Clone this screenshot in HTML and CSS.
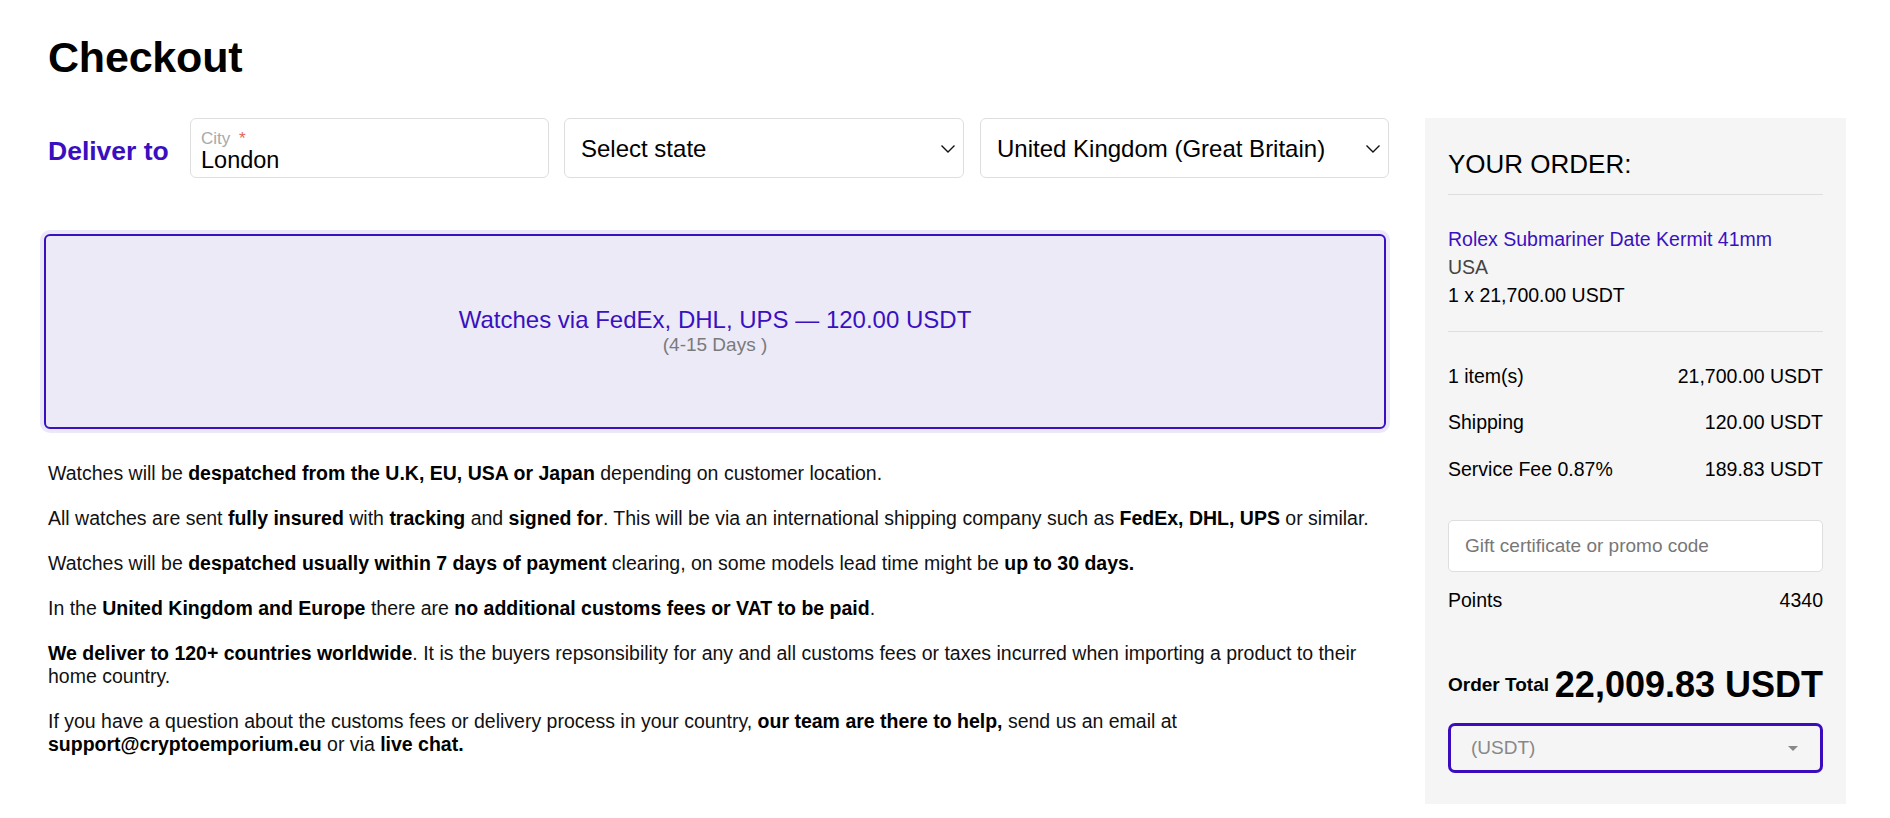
FILE: index.html
```html
<!DOCTYPE html>
<html lang="en">
<head>
<meta charset="utf-8">
<title>Checkout</title>
<link rel="stylesheet" href="styles.css">
</head>
<body>
<div class="page">
  <div class="main">
    <h1 class="title">Checkout</h1>
    <div class="deliver">
      <div class="deliver-label">Deliver to</div>
      <div class="field field-city">
        <div class="field-label">City <span class="req">*</span></div>
        <div class="field-value">London</div>
      </div>
      <div class="field field-select field-state">
        <span>Select state</span>
        <svg class="chev" width="16" height="10" viewBox="0 0 16 10"><polyline points="1.5,1.5 8,8 14.5,1.5" fill="none" stroke="#111" stroke-width="1.4"/></svg>
      </div>
      <div class="field field-select field-country">
        <span>United Kingdom (Great Britain)</span>
        <svg class="chev" width="16" height="10" viewBox="0 0 16 10"><polyline points="1.5,1.5 8,8 14.5,1.5" fill="none" stroke="#111" stroke-width="1.4"/></svg>
      </div>
    </div>
    <div class="ship-option">
      <div class="ship-name">Watches via FedEx, DHL, UPS — 120.00 USDT</div>
      <div class="ship-days">(4-15 Days )</div>
    </div>
    <div class="info">
      <p>Watches will be <b>despatched from the U.K, EU, USA or Japan</b> depending on customer location.</p>
      <p>All watches are sent <b>fully insured</b> with <b>tracking</b> and <b>signed for</b>. This will be via an international shipping company such as <b>FedEx, DHL, UPS</b> or similar.</p>
      <p>Watches will be <b>despatched usually within 7 days of payment</b> clearing, on some models lead time might be <b>up to 30 days.</b></p>
      <p>In the <b>United Kingdom and Europe</b> there are <b>no additional customs fees or VAT to be paid</b>.</p>
      <p><b>We deliver to 120+ countries worldwide</b>. It is the buyers repsonsibility for any and all customs fees or taxes incurred when importing a product to their home country.</p>
      <p>If you have a question about the customs fees or delivery process in your country, <b>our team are there to help,</b> send us an email at <b>support@cryptoemporium.eu</b> or via <b>live chat.</b></p>
    </div>
  </div>
  <aside class="order">
    <h2 class="order-title">YOUR ORDER:</h2>
    <div class="order-item">
      <div class="item-name">Rolex Submariner Date Kermit 41mm</div>
      <div class="item-origin">USA</div>
      <div class="item-qty">1 x 21,700.00 USDT</div>
    </div>
    <div class="summary">
      <div class="sum-row"><span>1 item(s)</span><span>21,700.00 USDT</span></div>
      <div class="sum-row"><span>Shipping</span><span>120.00 USDT</span></div>
      <div class="sum-row"><span>Service Fee 0.87%</span><span>189.83 USDT</span></div>
    </div>
    <div class="promo">Gift certificate or promo code</div>
    <div class="sum-row points"><span>Points</span><span>4340</span></div>
    <div class="total">
      <span class="total-label">Order Total</span>
      <span class="total-value">22,009.83 USDT</span>
    </div>
    <div class="currency">
      <span>(USDT)</span>
      <span class="caret"></span>
    </div>
  </aside>
</div>
</body>
</html>
```

FILE: styles.css
```css
* { box-sizing: border-box; }
html, body { margin: 0; padding: 0; background: #fff; }
body {
  font-family: "Liberation Sans", Arial, Helvetica, sans-serif;
  color: #000;
}
.page {
  display: flex;
  align-items: flex-start;
  gap: 36px;
  padding: 32px 44px 0 48px;
}
.main {
  width: 1341px;
  flex: none;
}
.title {
  margin: 0 0 36px;
  font-size: 43px;
  line-height: 50px;
  font-weight: bold;
  letter-spacing: -0.2px;
}
.deliver {
  display: flex;
  align-items: center;
  height: 60px;
}
.deliver-label {
  font-size: 26.5px;
  font-weight: bold;
  color: #3a0fbf;
  width: 123px;
  margin-right: 19px;
  padding-top: 6px;
  white-space: nowrap;
}
.field {
  height: 60px;
  border: 1px solid #dedede;
  border-radius: 6px;
  background: #fff;
}
.field-city {
  width: 359px;
  padding: 11px 10px 0;
  margin-right: 15px;
}
.field-label {
  font-size: 17px;
  line-height: 18px;
  color: #a9a9a9;
}
.req { color: #e0655c; margin-left: 4px; }
.field-value {
  font-size: 23.5px;
  line-height: 24px;
  color: #000;
}
.field-select {
  display: flex;
  align-items: center;
  justify-content: space-between;
  padding: 1px 7px 0 16px;
  font-size: 24px;
}
.field-state { width: 400px; margin-right: 16px; }
.field-country { width: 409px; }
.chev { display: block; }
.ship-option {
  margin: 56px 3px 0 -4px;
  height: 195px;
  border: 2px solid #3a10c0;
  border-radius: 6px;
  background: #eceaf7;
  box-shadow: 0 0 0 4px #ebe8f9;
  display: flex;
  flex-direction: column;
  align-items: center;
  justify-content: center;
}
.ship-name {
  font-size: 24px;
  line-height: 27px;
  color: #3a10c0;
}
.ship-days {
  font-size: 19px;
  line-height: 24px;
  color: #7a7a7a;
}
.info { margin-top: 33px; }
.info p {
  margin: 0 0 22px;
  font-size: 19.5px;
  line-height: 23px;
  color: #111;
}
.info b { color: #000; }
.order {
  width: 421px;
  flex: none;
  margin-top: 86px;
  background: #f5f5f5;
  padding: 31px 23px 31px;
}
.order-title {
  margin: 0;
  font-size: 26px;
  line-height: 30px;
  font-weight: normal;
  padding-bottom: 15px;
  border-bottom: 1px solid #dedede;
}
.order-item {
  padding: 29.5px 0 22.5px;
  border-bottom: 1px solid #dedede;
  font-size: 19.5px;
  line-height: 28px;
}
.item-name { color: #3a10c0; }
.item-origin { color: #444; }
.item-qty { color: #000; }
.summary { padding-top: 29.5px; }
.sum-row {
  display: flex;
  justify-content: space-between;
  font-size: 19.5px;
  line-height: 28px;
  margin-bottom: 18.5px;
}
.summary .sum-row:last-child { margin-bottom: 0; }
.promo {
  margin-top: 37.5px;
  height: 52px;
  background: #fff;
  border: 1px solid #dedede;
  border-radius: 5px;
  padding-left: 16px;
  display: flex;
  align-items: center;
  font-size: 19px;
  color: #777;
}
.sum-row.points { margin: 13.5px 0 0; }
.total {
  margin-top: 49.5px;
  height: 44px;
  display: flex;
  align-items: center;
  justify-content: space-between;
}
.total-label {
  font-size: 19px;
  font-weight: bold;
}
.total-value {
  font-size: 36px;
  font-weight: bold;
}
.currency {
  margin-top: 16px;
  height: 50px;
  border: 3px solid #3a0cbd;
  border-radius: 7px;
  display: flex;
  align-items: center;
  justify-content: space-between;
  padding: 0 22px 0 20px;
  font-size: 19px;
  color: #888;
}
.caret {
  width: 0;
  height: 0;
  border-left: 5px solid transparent;
  border-right: 5px solid transparent;
  border-top: 5px solid #888;
}
```
